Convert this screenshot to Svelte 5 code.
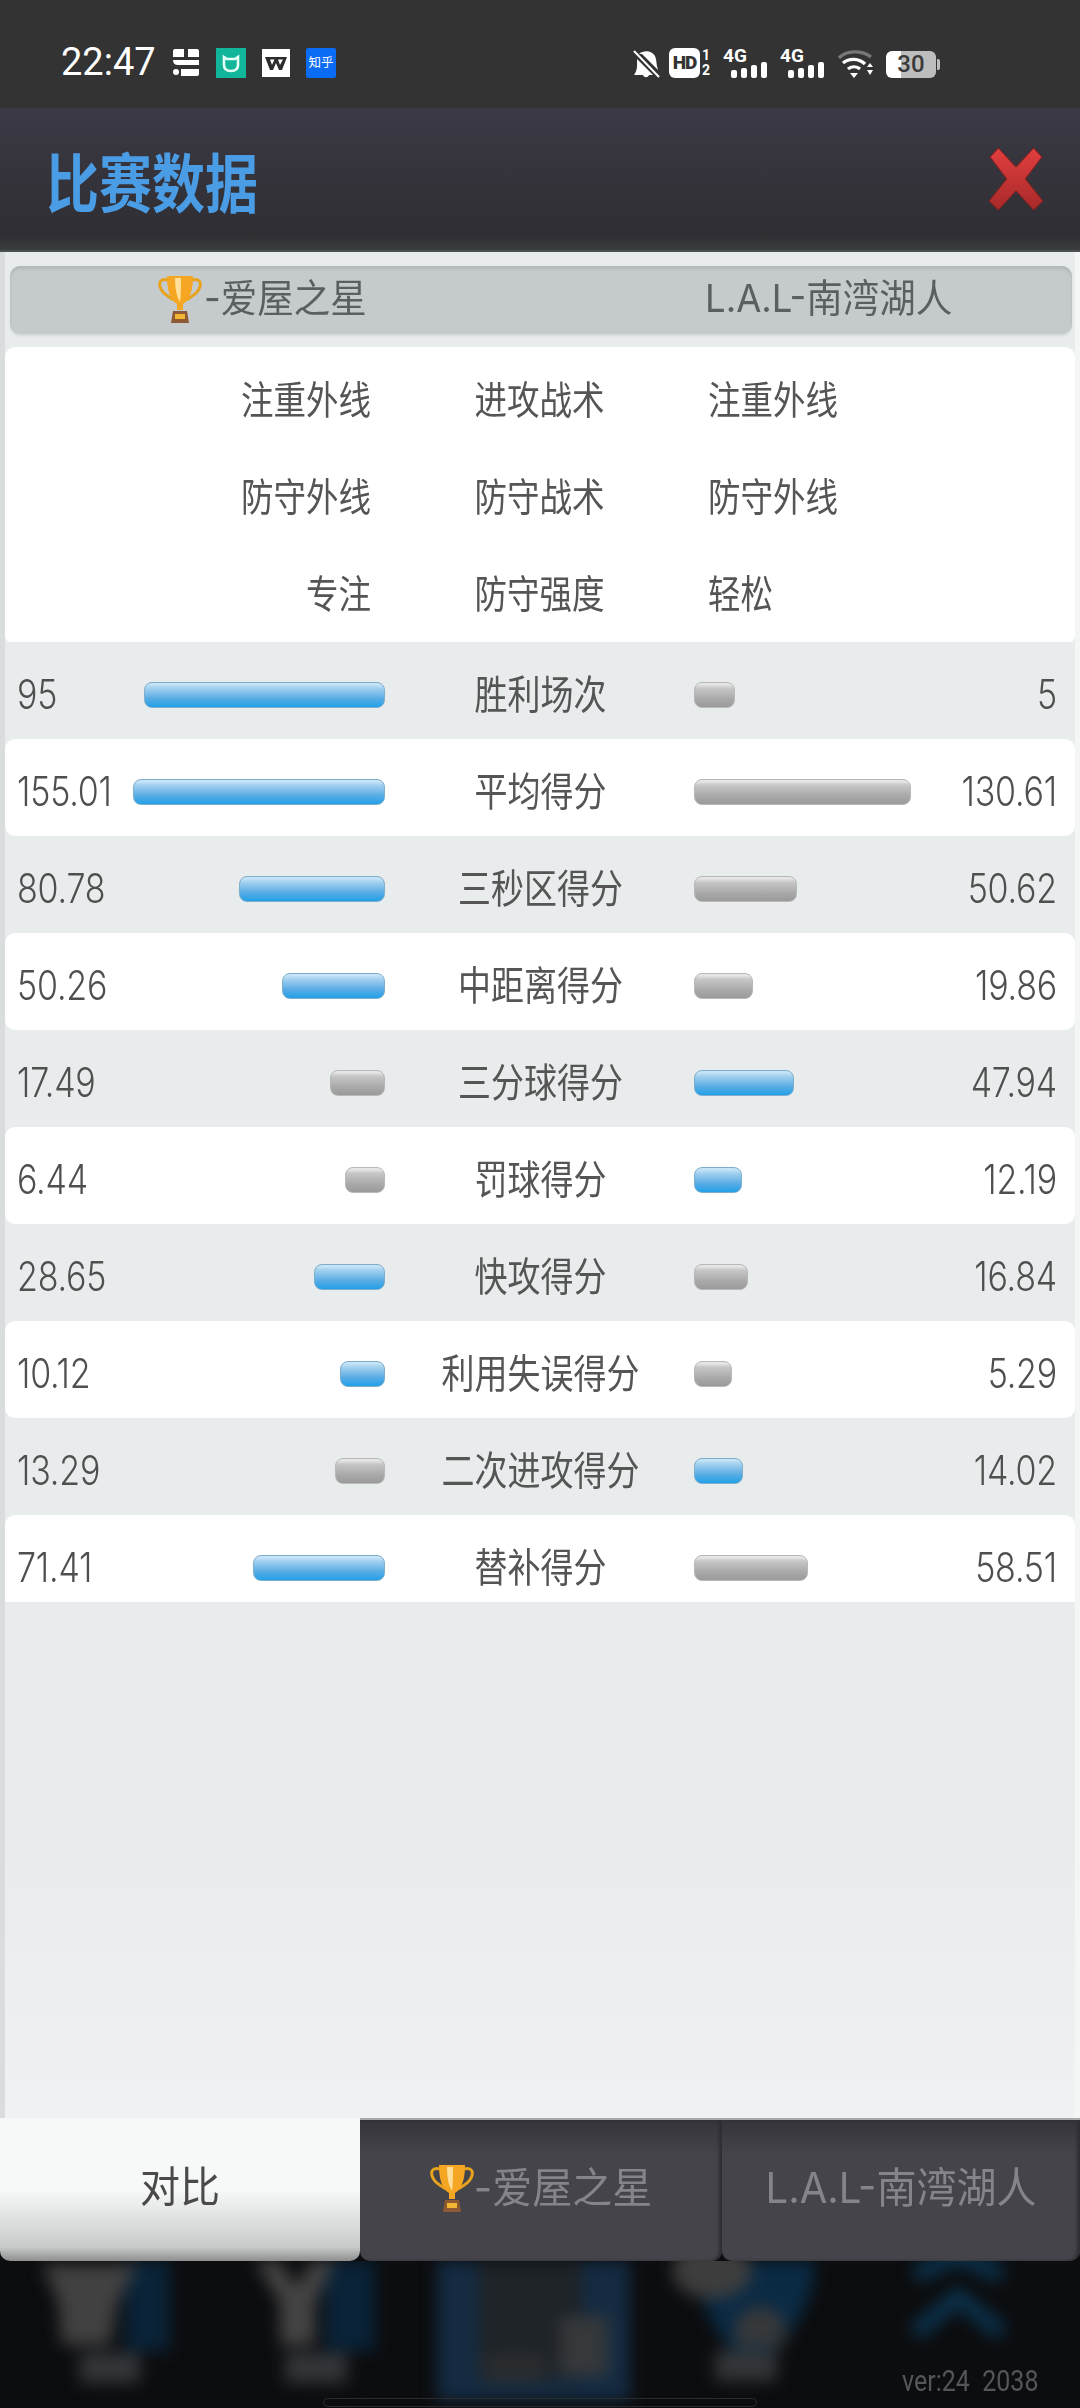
<script lang="ts">
	type Side = { value: string; width: number; win: boolean };
	type Stat = { label: string; left: Side; right: Side };

	const s = (value: string, width: number, win: boolean): Side => ({ value, width, win });

	const tactics = [
		{ left: '注重外线', label: '进攻战术', right: '注重外线' },
		{ left: '防守外线', label: '防守战术', right: '防守外线' },
		{ left: '专注', label: '防守强度', right: '轻松' }
	];

	const stats: Stat[] = [
		{ label: '胜利场次', left: s('95', 241, true), right: s('5', 41, false) },
		{ label: '平均得分', left: s('155.01', 252, true), right: s('130.61', 217, false) },
		{ label: '三秒区得分', left: s('80.78', 146, true), right: s('50.62', 103, false) },
		{ label: '中距离得分', left: s('50.26', 103, true), right: s('19.86', 59, false) },
		{ label: '三分球得分', left: s('17.49', 55, false), right: s('47.94', 100, true) },
		{ label: '罚球得分', left: s('6.44', 40, false), right: s('12.19', 48, true) },
		{ label: '快攻得分', left: s('28.65', 71, true), right: s('16.84', 54, false) },
		{ label: '利用失误得分', left: s('10.12', 45, true), right: s('5.29', 38, false) },
		{ label: '二次进攻得分', left: s('13.29', 50, false), right: s('14.02', 49, true) },
		{ label: '替补得分', left: s('71.41', 132, true), right: s('58.51', 114, false) }
	];
</script>

{#snippet trophy()}
	<svg class="trophy" viewBox="0 0 44 50" aria-hidden="true">
		<path d="M10 6 C2 4 0 9 3 15 C5 20 11 23 16 26 M34 6 C42 4 44 9 41 15 C39 20 33 23 28 26" fill="none" stroke="#e8a21c" stroke-width="3" />
		<path d="M9 2 H35 C35 16 32 26 25 30 V36 H19 V30 C12 26 9 16 9 2 Z" fill="#f5a623" />
		<path d="M17 4 H23 C23 14 23 22 22 28 C18 22 17 12 17 4 Z" fill="#ffdf9a" />
		<path d="M15 37 H29 L31 49 H13 Z" fill="#8d5a34" />
		<rect x="17" y="40" width="10" height="5" fill="#f2b632" />
	</svg>
{/snippet}

<div class="page">
	<div class="status">
		<span class="time">22:47</span>
		<svg class="ic-store" viewBox="0 0 26 27" aria-hidden="true">
			<path d="M2 0 H11 V8 H0 V2 Q0 0 2 0 Z M15 0 H24 Q26 0 26 2 V8 H15 Z M0 11 H26 V16 H5 Q0 16 0 11 Z" fill="#fff" />
			<circle cx="3" cy="23" r="3" fill="#fff" />
			<path d="M8 20 H26 V25 Q26 27 24 27 H8 Z" fill="#fff" />
		</svg>
		<svg class="ic-mi" viewBox="0 0 30 30" aria-hidden="true">
			<rect width="30" height="30" fill="#10b59a" />
			<path d="M8 9 L11 11 H19 L22 9 V17 C22 21 19 23 15 23 C11 23 8 21 8 17 Z" fill="none" stroke="#e4fff8" stroke-width="2.6" />
		</svg>
		<svg class="ic-wps" viewBox="0 0 28 28" aria-hidden="true">
			<rect width="28" height="28" fill="#fff" />
			<path d="M3 8 H25 L20 21 H17 L14 14 L11 21 H8 Z M8 10.5 L10 16 L12.5 10.5 Z M16 10.5 L18 16 L21 10.5 Z" fill="#2c2c2c" fill-rule="evenodd" />
		</svg>
		<span class="ic-zhihu">知乎</span>

		<div class="status-right">
			<svg class="ic-bell" viewBox="0 0 27 28" aria-hidden="true">
				<path d="M6 4 C10 0 19 0 22 6 C24 10 23 15 25 20 L9 4 Z M4 9 L20 25 H16 C15 28 11 28 10 25 H1 C5 20 4 14 4 9 Z" fill="#fff" />
				<path d="M1 1 L26 27" stroke="#fff" stroke-width="2" />
			</svg>
			<span class="hd">HD</span>
			<span class="sim"><b>1</b><b>2</b></span>
			{#each [0, 1] as i (i)}
				<span class="net">
					<span class="net-label">4G</span>
					<span class="net-bars"><i style="height:8px"></i><i style="height:10px"></i><i style="height:13px"></i><i style="height:16px"></i></span>
				</span>
			{/each}
			<svg class="ic-wifi" viewBox="0 0 36 28" aria-hidden="true">
				<path d="M1 8 C8 0 24 0 33 7" fill="none" stroke="#777" stroke-width="3.4" />
				<path d="M5 13 C11 8 21 8 27 14" fill="none" stroke="#fff" stroke-width="3.4" />
				<path d="M10 19 C13 16 19 16 22 19" fill="none" stroke="#fff" stroke-width="3.2" />
				<path d="M12 23 H20 L16 28 Z M29 17 L32 13 L35 17 Z M29 20 H35 L32 25 Z" fill="#fff" />
			</svg>
			<span class="battery"><span class="battery-num">30</span></span>
		</div>
	</div>

	<header class="title-bar">
		<h1 class="title"><span class="tall">比赛数据</span></h1>
		<svg class="close" viewBox="0 0 54 64" preserveAspectRatio="none" aria-hidden="true">
			<defs>
				<linearGradient id="red" x1="0" y1="0" x2="0" y2="1">
					<stop offset="0" stop-color="#e23e3e" />
					<stop offset="1" stop-color="#a82a2a" />
				</linearGradient>
			</defs>
			<path d="M10 1 L27 20 L44 1 L52 10 L36 32 L53 54 L44 63 L27 44 L10 63 L1 54 L18 32 L2 10 Z" fill="url(#red)" stroke="#7c2222" stroke-width="1" />
		</svg>
	</header>

	<main class="panel">
		<div class="teams">
			<div class="team team-a">{@render trophy()}<span class="tall-s">-爱屋之星</span></div>
			<div class="team team-b"><span class="tall-s">L.A.L-南湾湖人</span></div>
		</div>

		<section class="tactics">
			{#each tactics as t (t.label)}
				<div class="tactic">
					<span class="t-left"><span class="tall">{t.left}</span></span>
					<span class="t-mid"><span class="tall">{t.label}</span></span>
					<span class="t-right"><span class="tall">{t.right}</span></span>
				</div>
			{/each}
		</section>

		<section class="stats">
			{#each stats as row, i (row.label)}
				<div class="row" class:odd={i % 2 === 1}>
					<div class="side-left">
						<span class="num"><span class="tall">{row.left.value}</span></span>
						<span class="bar" class:blue={row.left.win} style="width:{row.left.width}px"></span>
					</div>
					<span class="label"><span class="tall">{row.label}</span></span>
					<div class="side-right">
						<span class="bar" class:blue={row.right.win} style="width:{row.right.width}px"></span>
						<span class="num"><span class="tall">{row.right.value}</span></span>
					</div>
				</div>
			{/each}
		</section>
	</main>

	<nav class="tabs">
		<div class="tab active"><span class="tall-s">对比</span></div>
		<div class="tab tab-2">{@render trophy()}<span class="tall-s">-爱屋之星</span></div>
		<div class="tab tab-3"><span class="tall-s">L.A.L-南湾湖人</span></div>
	</nav>

	<!-- game menu behind the dialog, dimmed and blurred -->
	<footer class="behind">
		<svg class="behind-art" viewBox="0 0 1080 147" aria-hidden="true">
			<g class="blur">
				<rect x="125" y="0" width="45" height="90" fill="#0a2338" />
				<path d="M42 4 H138 L118 40 L110 84 H62 L58 40 Z" fill="#414141" />
				<rect x="80" y="92" width="60" height="30" fill="#343639" />
				<rect x="325" y="0" width="50" height="90" fill="#0a2338" />
				<path d="M255 0 H280 L296 26 L312 0 H335 L315 42 V84 H280 V42 Z" fill="#444" />
				<rect x="285" y="92" width="62" height="30" fill="#343639" />
				<rect x="437" y="0" width="193" height="140" fill="#142b42" />
				<rect x="478" y="0" width="104" height="118" fill="#1e2328" />
				<rect x="560" y="55" width="48" height="60" fill="#36383a" />
				<rect x="485" y="92" width="60" height="30" fill="#2a2c2e" />
				<path d="M690 0 H815 C815 40 790 85 750 110 C725 85 700 50 690 0 Z" fill="#0a2a44" />
				<ellipse cx="712" cy="10" rx="40" ry="28" fill="#3d3d3d" />
				<path d="M735 62 C745 40 775 40 785 62 V85 H735 Z" fill="#36383a" />
				<rect x="715" y="90" width="62" height="30" fill="#343639" />
				<path d="M915 14 L958 -6 L1002 14 M915 72 L958 36 L1002 72" fill="none" stroke="#0b3049" stroke-width="18" />
			</g>
		</svg>
		<span class="version"><span class="tall">ver:24&nbsp;&nbsp;2038</span></span>
		<span class="home"></span>
	</footer>
</div>

<style>
	:global(body) {
		margin: 0;
		background: #0c0d0f;
	}
	.page {
		width: 1080px;
		height: 2408px;
		display: flex;
		flex-direction: column;
		overflow: hidden;
		font-family: Inter, 'Noto Sans CJK SC', sans-serif;
		color: #555;
	}
	.tall {
		display: inline-block;
		transform: scaleY(1.2);
	}
	.tall-s {
		display: inline-block;
		transform: scaleY(1.06);
	}

	/* status bar */
	.status {
		height: 108px;
		flex-shrink: 0;
		background: #333;
		display: flex;
		align-items: center;
		padding: 17px 0 0 61px;
		box-sizing: border-box;
		color: #fff;
		font-family: Roboto, 'Noto Sans CJK SC', sans-serif;
	}
	.time {
		font-size: 38px;
		line-height: 1;
		width: 112px;
		margin-top: -2px;
	}
	.ic-store {
		width: 26px;
		height: 27px;
		margin-right: 17px;
	}
	.ic-mi {
		width: 30px;
		height: 30px;
		margin-right: 16px;
	}
	.ic-wps {
		width: 28px;
		height: 28px;
		margin-right: 16px;
	}
	.ic-zhihu {
		width: 30px;
		height: 30px;
		border-radius: 2px;
		background: #0a6cf5;
		font-size: 12.5px;
		line-height: 30px;
		text-align: center;
		white-space: nowrap;
	}
	.status-right {
		display: flex;
		align-items: flex-end;
		margin-left: 297px;
		height: 30px;
	}
	.ic-bell {
		width: 27px;
		height: 28px;
		margin-right: 9px;
	}
	.hd {
		width: 31px;
		height: 30px;
		border-radius: 6px;
		background: #fff;
		color: #333;
		font-size: 19px;
		font-weight: 900;
		line-height: 30px;
		text-align: center;
		letter-spacing: -1px;
	}
	.sim {
		display: flex;
		flex-direction: column;
		align-items: center;
		width: 12px;
		font-size: 14px;
		line-height: 15px;
		margin-right: 11px;
	}
	.sim b {
		font-weight: 700;
	}
	.net {
		position: relative;
		width: 44px;
		height: 30px;
		margin-right: 13px;
	}
	.net-label {
		position: absolute;
		left: 0;
		top: -3px;
		font-size: 19px;
		font-weight: 700;
		line-height: 22px;
	}
	.net-bars {
		position: absolute;
		right: 0;
		bottom: 0;
		display: flex;
		align-items: flex-end;
		gap: 4px;
	}
	.net-bars i {
		display: block;
		width: 6px;
		border-radius: 2px;
		background: #fff;
	}
	.ic-wifi {
		width: 36px;
		height: 28px;
		margin-left: 1px;
		margin-right: 12px;
	}
	.battery {
		width: 50px;
		height: 27px;
		border-radius: 6px;
		background: linear-gradient(90deg, #fff 30%, #bdbdbd 30%);
		color: #3a3a3a;
		font-size: 24px;
		font-weight: 500;
		line-height: 27px;
		text-align: center;
		position: relative;
	}
	.battery::after {
		content: '';
		position: absolute;
		right: -4px;
		top: 8px;
		width: 3px;
		height: 11px;
		border-radius: 0 2px 2px 0;
		background: #bdbdbd;
	}

	/* title bar */
	.title-bar {
		height: 144px;
		flex-shrink: 0;
		background: linear-gradient(#3b3a45, #2f2e33 90%, #3a3d3e);
		display: flex;
		align-items: center;
		justify-content: space-between;
		padding: 0 36px 0 46px;
		box-sizing: border-box;
		border-bottom: 2px solid #4a5050;
	}
	.title {
		margin: 0;
		font-size: 53px;
		font-weight: 700;
		line-height: 1;
		color: #4a9ce4;
		font-family: 'Noto Sans CJK SC', sans-serif;
	}
	.close {
		width: 56px;
		height: 64px;
	}

	/* panel */
	.panel {
		flex: 1;
		min-height: 0;
		background: linear-gradient(#e8ecec 85%, #eff2f2);
		border-left: 5px solid #d9dddd;
		border-right: 5px solid #f4f6f6;
		padding-top: 14px;
		box-sizing: border-box;
		display: flex;
		flex-direction: column;
	}
	.teams {
		height: 68px;
		flex-shrink: 0;
		margin: 0 3px 13px 5px;
		display: grid;
		grid-template-columns: 530px 1fr;
		align-items: center;
		background: #c5cacc;
		border-radius: 10px;
		box-shadow: inset 0 3px 3px #b4b8ba, 0 2px 2px #d4d8d8;
		font-size: 36.5px;
		color: #5b5f60;
		line-height: 1;
	}
	.team {
		display: flex;
		align-items: center;
		white-space: nowrap;
		margin-top: -3px;
	}
	.team-a {
		padding-left: 148px;
	}
	.team-b {
		padding-left: 165px;
	}
	.trophy {
		width: 44px;
		height: 50px;
		flex-shrink: 0;
		margin-right: 2px;
	}

	.tactics {
		height: 295px;
		flex-shrink: 0;
		background: #fff;
		border-radius: 10px 10px 6px 6px;
		padding-top: 6px;
		box-sizing: border-box;
	}
	.tactic {
		height: 97px;
		display: grid;
		grid-template-columns: 366px 337px 1fr;
		align-items: center;
		font-size: 32.5px;
		line-height: 1;
	}
	.t-left {
		text-align: right;
	}
	.t-mid {
		text-align: center;
	}

	/* stat rows */
	.stats {
		height: 960px;
		flex-shrink: 0;
		overflow: hidden;
	}
	.row {
		height: 97px;
		padding-top: 9px;
		box-sizing: border-box;
		display: grid;
		grid-template-columns: 380px 311px 1fr;
		align-items: center;
		font-size: 33px;
		line-height: 1;
		border-radius: 10px;
	}
	.row.odd {
		background: #fff;
	}
	.side-left,
	.side-right {
		display: flex;
		align-items: center;
		justify-content: space-between;
	}
	.side-left {
		padding-left: 12px;
	}
	.side-right {
		padding-right: 18px;
		margin-left: -2px;
	}
	.label {
		text-align: center;
		white-space: nowrap;
	}
	.num {
		font-size: 34px;
		font-weight: 300;
		letter-spacing: -0.2px;
		color: #4f4f4f;
	}
	.bar {
		height: 26px;
		box-sizing: border-box;
		border: 1px solid #b8b8b8;
		border-radius: 8px;
		background: linear-gradient(#e6e6e6 6%, #c6c6c6 22%, #aaa 65%, #9a9a9a);
	}
	.bar.blue {
		border-color: #7fadcc;
		background: linear-gradient(#c6e4f7 6%, #a2d0ef 22%, #58ace4 65%, #22a0e8);
	}

	/* bottom tabs */
	.tabs {
		height: 143px;
		flex-shrink: 0;
		display: grid;
		grid-template-columns: 360px 362px 1fr;
		background: #0c0d0f;
		font-size: 40px;
		color: #84848a;
		line-height: 1;
	}
	.tab {
		display: flex;
		align-items: center;
		justify-content: center;
		white-space: nowrap;
		padding-bottom: 5px;
		border-radius: 0 0 10px 10px;
		background: linear-gradient(#353439, #45444a 25%, #45444a);
		box-shadow: inset -3px 0 3px #2e2e33;
		border-top: 2px solid #aaa;
		box-sizing: border-box;
	}
	.tab .trophy {
		margin-right: 0;
	}
	.tab.active {
		background: linear-gradient(#f7f9f9 50%, #c9caca 90%, #8f8f8f);
		color: #4a4a4a;
		border-top: none;
		box-shadow: none;
	}

	/* menu behind */
	.behind {
		height: 147px;
		flex-shrink: 0;
		position: relative;
		background: #0c0d0f;
		overflow: hidden;
	}
	.behind-art {
		position: absolute;
		left: 0;
		top: 0;
		width: 1080px;
		height: 147px;
	}
	.blur {
		filter: blur(8px);
	}
	.version {
		position: absolute;
		left: 902px;
		top: 105px;
		font-size: 25px;
		line-height: 30px;
		color: #55565a;
		white-space: nowrap;
		font-family: Roboto, sans-serif;
	}
	.home {
		position: absolute;
		left: 323px;
		top: 137px;
		width: 434px;
		height: 9px;
		box-sizing: border-box;
		border: 1px solid #2a2b2d;
		border-radius: 5px;
	}
</style>
